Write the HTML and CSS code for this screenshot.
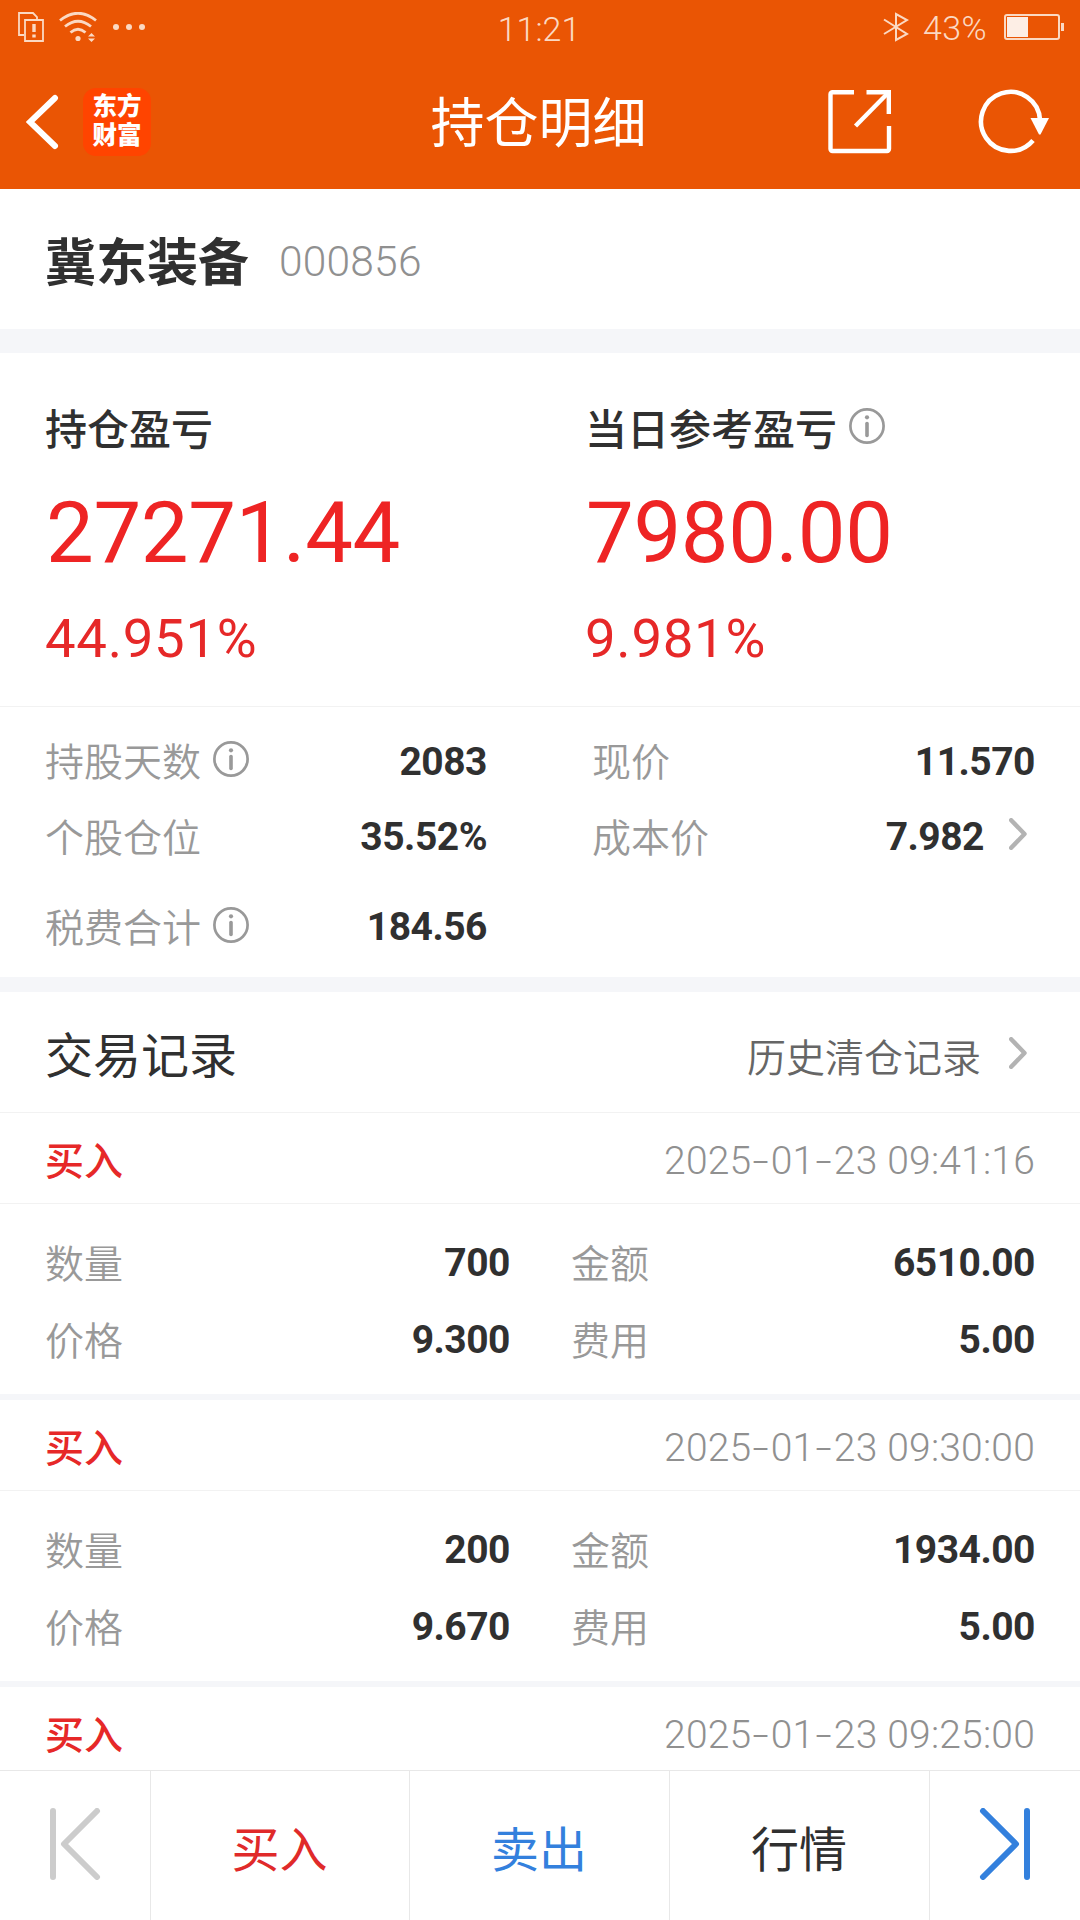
FILE: index.html
```html
<!DOCTYPE html>
<html lang="zh-CN">
<head>
    <meta charset="UTF-8">
    <meta name="viewport" content="width=device-width, initial-scale=1.0">
    <title>持仓明细</title>
    <link rel="stylesheet" href="styles.css">
</head>
<body>
    <!-- shared icons -->
    <svg class="sprite">
        <symbol id="icon-info" viewBox="0 0 36 36">
            <circle cx="18" cy="18" r="16.6" fill="none" stroke="#999" stroke-width="2.7"/>
            <circle cx="18" cy="9.3" r="2.1" fill="#999"/>
            <path d="M18 15.5v12" stroke="#999" stroke-width="3.6" stroke-linecap="round"/>
        </symbol>
        <symbol id="icon-arrow" viewBox="0 0 18 32">
            <path d="M2.2 2.200L15.500 16 2.200 29.800" fill="none" stroke="#b3b3b3" stroke-width="4.400" stroke-linecap="round" stroke-linejoin="round"/>
        </symbol>
    </svg>

    <div class="page">
        <header class="header">
            <div class="status-bar">
                <div class="status-left">
                    <svg width="26" height="30" viewBox="0 0 26 30" fill="none" stroke="#fbd9c3" stroke-width="1.8">
                        <path d="M6 23H1V1h14l4 4v3"/>
                        <path d="M7 8h18v21H7z"/>
                        <path d="M16 12v8M16 22.5v3" stroke-width="3.4"/>
                    </svg>
                    <svg class="wifi" width="38" height="30" viewBox="0 0 38 30" fill="none" stroke="#fbd9c3" stroke-width="2.8">
                        <path d="M1 8.500Q19-6 37 8.500"/>
                        <path d="M6 14.500Q19 4 32 14.500"/>
                        <path d="M11.500 20.500Q19 14 26.500 20.500"/>
                        <circle cx="19" cy="26.500" r="2.600" fill="#fbd9c3" stroke="none"/>
                        <path d="M29 24.500l3.500-3.500 3.500 3.500zM29 26.500l3.500 3.500 3.500-3.500z" fill="#fbd9c3" stroke="none"/>
                    </svg>
                    <svg width="32" height="30" viewBox="0 0 32 30" fill="#fbd9c3">
                        <circle cx="3" cy="15" r="3"/>
                        <circle cx="16" cy="15" r="3"/>
                        <circle cx="29" cy="15" r="3"/>
                    </svg>
                </div>
                <div class="time">11:21</div>
                <div class="status-right">
                    <svg width="26" height="30" viewBox="0 0 26 30" fill="none" stroke="#fbd9c3" stroke-width="2">
                        <path d="M1 7.500L24 22l-11 6V2l11 6L1 22"/>
                    </svg>
                    <span class="battery-text">43%</span>
                    <svg width="61" height="26" viewBox="0 0 61 26">
                        <rect x="1" y="1" width="54" height="24" rx="2" fill="none" stroke="#fbd9c3" stroke-width="2"/>
                        <rect x="3" y="3" width="21" height="20" fill="#fdeee5"/>
                        <rect x="57" y="9" width="3" height="8" fill="#fbd9c3"/>
                    </svg>
                </div>
            </div>
            <div class="nav-bar">
                <div class="nav-left">
                    <svg width="34" height="56" viewBox="0 0 34 56" fill="none" stroke="#fff" stroke-width="6" stroke-linecap="round">
                        <path d="M29 4L4 28l25 24" />
                    </svg>
                    <div class="app-logo">东方<br>财富</div>
                </div>
                <div class="nav-title">持仓明细</div>
                <div class="nav-right">
                    <svg width="64" height="64" viewBox="0 0 64 64" fill="none" stroke="#fff" stroke-width="4.400">
                        <path d="M26 2.200H4.500a2 2 0 0 0-2 2V59a2 2 0 0 0 2 2h54.500a2 2 0 0 0 2-2V36"/>
                        <path d="M38.500 2.200h22.300V24"/>
                        <path d="M60 3L27.500 36"/>
                    </svg>
                    <svg width="72" height="66" viewBox="0 0 72 66">
                        <path d="M62 31A29.500 29.500 0 1 0 55 51.500" fill="none" stroke="#fff" stroke-width="4.600"/>
                        <path d="M52.500 29H71l-8.500 16.500h-1.500z" fill="#fff"/>
                    </svg>
                </div>
            </div>
        </header>

        <section class="stock">
            <span class="stock-name">冀东装备</span>
            <span class="stock-code">000856</span>
        </section>

        <section class="summary">
            <div class="summary-item">
                <div class="summary-title">持仓盈亏</div>
                <div class="summary-value">27271.44</div>
                <div class="summary-rate">44.951%</div>
            </div>
            <div class="summary-item">
                <div class="summary-title">当日参考盈亏 <svg class="info"><use href="#icon-info"/></svg></div>
                <div class="summary-value">7980.00</div>
                <div class="summary-rate">9.981%</div>
            </div>
        </section>

        <section class="details">
            <div class="cell"><span class="label">持股天数</span><svg class="info"><use href="#icon-info"/></svg><span class="value">2083</span></div>
            <div class="cell"><span class="label">现价</span><span class="value">11.570</span></div>
            <div class="cell"><span class="label">个股仓位</span><span class="value">35.52%</span></div>
            <div class="cell"><span class="label">成本价</span><span class="value">7.982</span><svg class="arrow"><use href="#icon-arrow"/></svg></div>
            <div class="cell last"><span class="label">税费合计</span><svg class="info"><use href="#icon-info"/></svg><span class="value">184.56</span></div>
        </section>

        <section class="records">
            <div class="records-header">
                <span class="records-title">交易记录</span>
                <span class="records-link">历史清仓记录</span>
                <svg class="arrow"><use href="#icon-arrow"/></svg>
            </div>

            <div class="record">
                <div class="record-header"><span class="type">买入</span><span class="date">2025<i>-</i>01<i>-</i>23 09:41:16</span></div>
                <div class="record-body">
                    <div class="cell"><span class="label">数量</span><span class="value">700</span></div>
                    <div class="cell"><span class="label">金额</span><span class="value">6510.00</span></div>
                    <div class="cell"><span class="label">价格</span><span class="value">9.300</span></div>
                    <div class="cell"><span class="label">费用</span><span class="value">5.00</span></div>
                </div>
            </div>

            <div class="record">
                <div class="record-header"><span class="type">买入</span><span class="date">2025<i>-</i>01<i>-</i>23 09:30:00</span></div>
                <div class="record-body">
                    <div class="cell"><span class="label">数量</span><span class="value">200</span></div>
                    <div class="cell"><span class="label">金额</span><span class="value">1934.00</span></div>
                    <div class="cell"><span class="label">价格</span><span class="value">9.670</span></div>
                    <div class="cell"><span class="label">费用</span><span class="value">5.00</span></div>
                </div>
            </div>

            <div class="record">
                <div class="record-header"><span class="type">买入</span><span class="date">2025<i>-</i>01<i>-</i>23 09:25:00</span></div>
            </div>
        </section>

        <footer class="tab-bar">
            <div class="tab">
                <svg width="52" height="72" viewBox="0 0 52 72" fill="none" stroke="#ccc" stroke-width="6" stroke-linecap="round" stroke-linejoin="round">
                    <path d="M4 3v66M48 3L15 36l33 33"/>
                </svg>
            </div>
            <div class="tab buy">买入</div>
            <div class="tab sell">卖出</div>
            <div class="tab quote">行情</div>
            <div class="tab">
                <svg width="52" height="72" viewBox="0 0 52 72" fill="none" stroke="#3380dd" stroke-width="6" stroke-linecap="round" stroke-linejoin="round">
                    <path d="M48 3v66M4 3l33 33L4 69"/>
                </svg>
            </div>
        </footer>
    </div>
</body>
</html>
```
FILE: styles.css
```css
* {
    box-sizing: border-box;
}
body {
    margin: 0;
    background-color: #fff;
    color: #303030;
    font-family: Roboto, "Noto Sans CJK SC", sans-serif;
}
svg {
    display: block;
    flex: none;
}
.sprite {
    position: absolute;
    width: 0;
    height: 0;
}
.page {
    display: flex;
    flex-direction: column;
    width: 1080px;
    height: 1920px;
    overflow: hidden;
}

/* header */
.header {
    flex: none;
    height: 189px;
    background-color: #ea5504;
    color: #fff;
}
.status-bar {
    display: grid;
    grid-template-columns: 1fr auto 1fr;
    align-items: center;
    height: 54px;
    padding: 0 15px 0 18px;
    color: #fbd9c3;
    font-size: 34px;
    font-weight: 300;
}
.status-left,
.status-right {
    display: flex;
    align-items: center;
}
.status-right {
    justify-content: flex-end;
}
.wifi {
    margin: 0 16px 0 15px;
}
.time {
    padding: 4px 5px 0 0;
    letter-spacing: 0;
}
.battery-text {
    margin: 0 17px 0 14px;
    padding-top: 1px;
    letter-spacing: 0.4px;
}
.nav-bar {
    display: grid;
    grid-template-columns: 1fr auto 1fr;
    align-items: center;
    height: 135px;
    padding: 0 30px 0 26px;
}
.nav-left,
.nav-right {
    display: flex;
    align-items: center;
}
.nav-right {
    justify-content: flex-end;
    gap: 86px;
}
.app-logo {
    width: 68px;
    height: 68px;
    margin-left: 23px;
    padding-top: 4px;
    border-radius: 13px;
    background-color: #ff4400;
    text-align: center;
    font-size: 24.5px;
    font-weight: 900;
    line-height: 29px;
}
.nav-title {
    padding: 7px 0 0 1px;
    font-size: 54px;
    line-height: 80px;
}

/* stock name */
.stock {
    display: flex;
    align-items: center;
    flex: none;
    height: 164px;
    padding: 4px 45px 0;
    border-bottom: 24px solid #f5f6f9;
}
.stock-name {
    padding-bottom: 4px;
    font-size: 51px;
    font-weight: 700;
}
.stock-code {
    margin-left: 30px;
    color: #909090;
    font-size: 42.5px;
    font-weight: 300;
    letter-spacing: 0.2px;
}

/* profit and loss */
.summary {
    display: grid;
    grid-template-columns: 540px 1fr;
    flex: none;
    height: 354px;
    padding: 43px 45px 0;
    border-bottom: 1px solid #f2f2f2;
}
.summary-title {
    display: flex;
    align-items: center;
    height: 60px;
    font-size: 42px;
    font-weight: 500;
}
.summary-title .info {
    margin: -1px 0 0 12px;
}
.summary-value {
    margin-top: 27px;
    padding-left: 1px;
    color: #ee2424;
    font-size: 85px;
    line-height: 100px;
    letter-spacing: -0.35px;
}
.summary-rate {
    margin-top: 15px;
    color: #e62828;
    font-size: 54.5px;
    line-height: 80px;
    letter-spacing: 0.7px;
}
.info {
    width: 36px;
    height: 36px;
}
.arrow {
    width: 18px;
    height: 32px;
}

/* label + value rows */
.cell {
    display: flex;
    align-items: center;
    font-size: 39px;
}
.label {
    padding-bottom: 4px;
    color: #999;
    font-weight: 350;
}
.value {
    margin-left: auto;
    padding-top: 1px;
    font-weight: 700;
    letter-spacing: -0.5px;
}
.cell .info {
    margin: -4px 0 0 12px;
}
.cell .arrow {
    margin: -5px 8px 0 25px;
}
.details {
    display: grid;
    grid-template-columns: 442px 443px;
    grid-template-rows: 76px 75px 105px;
    column-gap: 105px;
    flex: none;
    height: 285px;
    padding: 16px 45px 0;
    border-bottom: 15px solid #f5f6f9;
}
.details .last {
    padding-top: 14px;
    padding-bottom: 14px;
}

/* trade records */
.records {
    flex: 1;
    min-height: 0;
    overflow: hidden;
}
.records-header {
    display: flex;
    align-items: center;
    height: 121px;
    padding: 1px 53px 0 45px;
    border-bottom: 1px solid #f2f2f2;
}
.records-title {
    padding-bottom: 2px;
    font-size: 48px;
}
.records-link {
    margin: 4px 28px 0 auto;
    color: #666;
    font-size: 39px;
    font-weight: 350;
}
.record {
    border-bottom: 6px solid #f5f6f9;
}
.record-header {
    display: flex;
    align-items: center;
    justify-content: space-between;
    height: 91px;
    padding: 3px 45px 0;
    border-bottom: 1px solid #f2f2f2;
    font-size: 39px;
}
.type {
    padding-bottom: 4px;
    color: #e62828;
    font-weight: 500;
}
.date {
    padding-top: 2px;
    color: #909090;
    font-weight: 300;
    letter-spacing: 0.2px;
}
.date i {
    display: inline-block;
    font-style: normal;
    transform: scaleX(1.5);
    margin: 0 4px;
}
.record-body {
    display: grid;
    grid-template-columns: 465px 464px;
    grid-auto-rows: 77px;
    column-gap: 61px;
    height: 190px;
    padding: 20px 45px 0;
}

/* bottom bar */
.tab-bar {
    display: grid;
    grid-template-columns: 151px 259px 260px 260px 150px;
    flex: none;
    height: 150px;
    border-top: 1px solid #e8e8e8;
}
.tab {
    display: flex;
    align-items: center;
    justify-content: center;
    padding-right: 1px;
    border-right: 1px solid #e8e8e8;
    font-size: 48px;
}
.tab svg {
    margin-top: -4px;
}
.tab:last-child {
    border-right: none;
}
.buy {
    color: #e02a2a;
}
.sell {
    color: #3380dd;
}
```
